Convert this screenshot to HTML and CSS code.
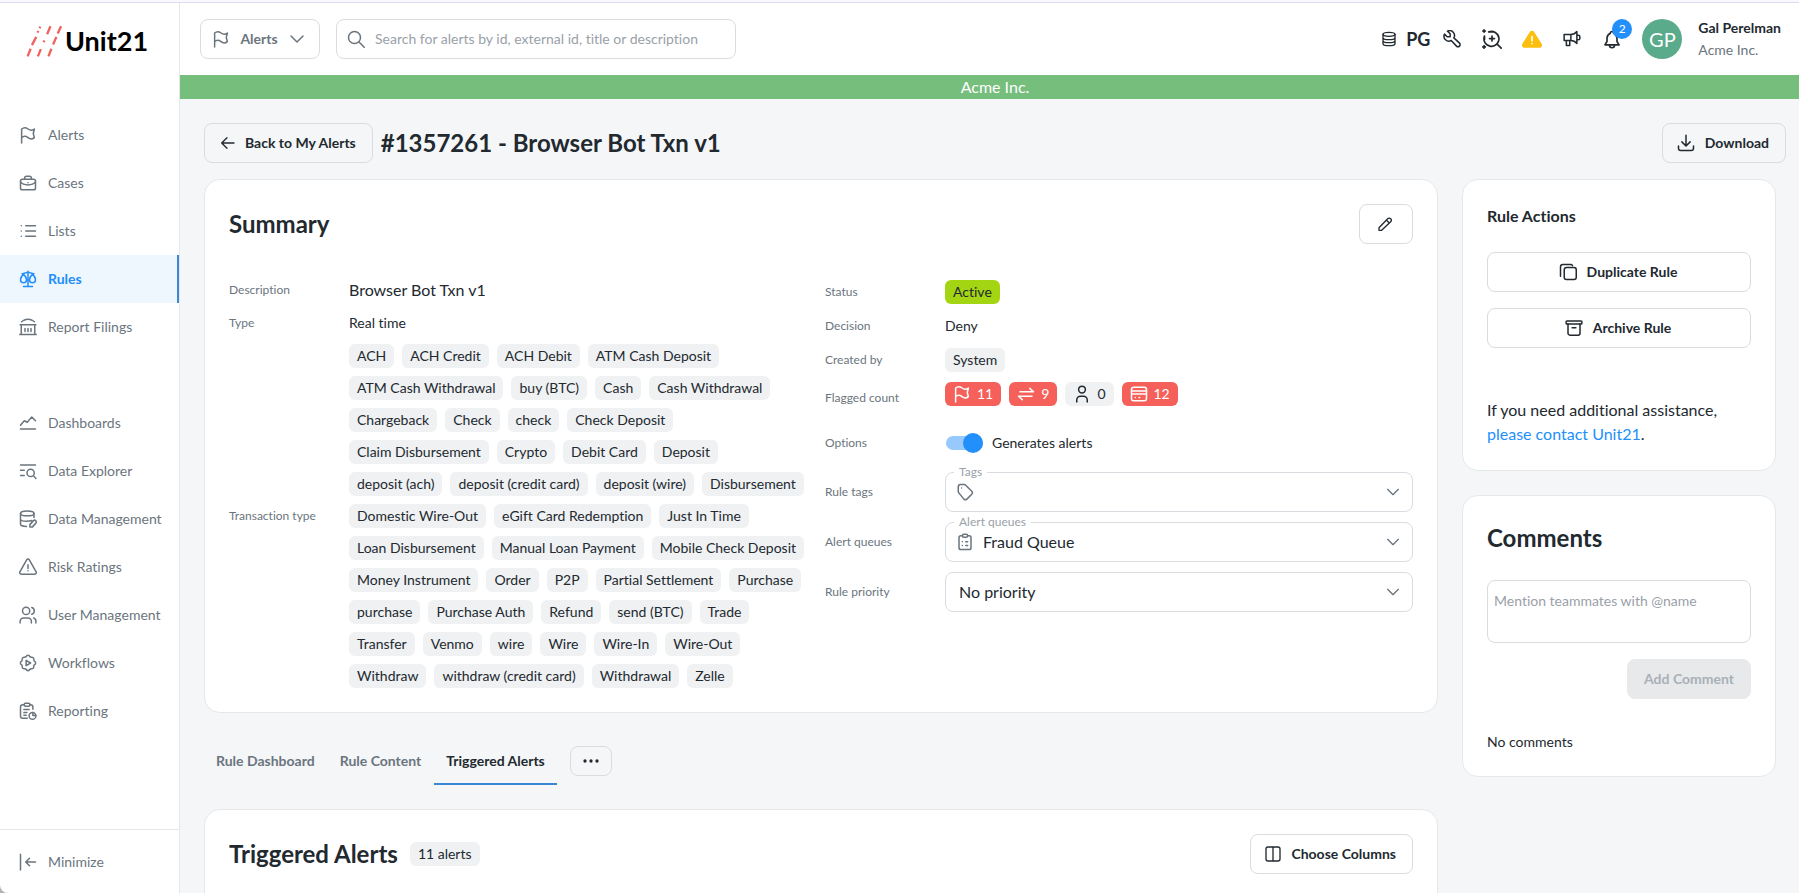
FILE: index.html
```html
<!DOCTYPE html>
<html lang="en">
<head>
  <meta charset="UTF-8" />
  <meta name="viewport" content="width=device-width, initial-scale=1.0" />
  <title>Unit21 - Browser Bot Txn v1</title>
  <link rel="stylesheet" href="styles.css">
</head>
<body>
  <!-- shared icons -->
  <svg class="sprite" aria-hidden="true">
    <symbol id="i-flag" viewBox="0 0 24 24"><path d="M3.500 4c3-2.500 6-2 8.500 0s5.500 2.500 8.500 0l-1.500 6l1.500 5.500c-3 2.500-6 2-8.500 0s-5.500-2.500-8.500 0zM3.500 22.500v-8" /></symbol>
    <symbol id="i-chevron" viewBox="0 0 24 24"><path d="M4 8l8 8l8-8" /></symbol>
    <symbol id="i-database" viewBox="0 0 24 24"><ellipse cx="12" cy="5" rx="9" ry="3" /><path d="M3 5v14c0 1.700 4 3 9 3s9-1.300 9-3v-14M3 10c0 1.700 4 3 9 3s9-1.300 9-3M3 14.500c0 1.700 4 3 9 3s9-1.300 9-3" /></symbol>
  </svg>

  <div class="app">
    <aside class="sidebar">
      <a class="logo" href="#">
        <svg class="logo-mark" viewBox="80 74 112 98">
          <path d="M85 168l9-23M98 134l13-25M115 96l2-5M121 83l2-5M116 168l9-22M133 125l3-5M144 101l10-24M148 168l9-23M162 132l10-23M176 99l10-22" />
        </svg>
        Unit21
      </a>
      <nav class="nav">
        <a href="#"><svg class="icon"><use href="#i-flag" /></svg>Alerts</a>
        <a href="#"><svg class="icon" viewBox="0 0 24 24"><rect x="2" y="7" width="20" height="14" rx="2.500" /><path d="M7.500 7v-1.500a2.500 2.500 0 0 1 2.500-2.500h4a2.500 2.500 0 0 1 2.500 2.500v1.500M2 10.500c2 2.500 6 4 10 4s8-1.500 10-4M12 11.500v.01" /></svg>Cases</a>
        <a href="#"><svg class="icon" viewBox="0 0 24 24"><path d="M9 5h13M9 12h13M9 19h13M3 5v.01M3 12v.01M3 19v.01" /></svg>Lists</a>
        <a class="active" href="#"><svg class="icon" viewBox="0 0 24 24"><path d="M6 22h12M12 1.500v20M4 5c4 0 5-2 8-2s4 2 8 2M6 5.500c-2 2-4 5-4 7.500c0 3 2 4 4 4s4-1 4-4c0-2.500-2-5.500-4-7.500zM18 5.500c-2 2-4 5-4 7.500c0 3 2 4 4 4s4-1 4-4c0-2.500-2-5.500-4-7.500z" /></svg>Rules</a>
        <a href="#"><svg class="icon" viewBox="0 0 24 24"><path d="M3.500 5l3-2a12 12 0 0 1 11 0l3 2M1.500 9h21M3 9v12M21 9v12M1 22h22M8 14v4M12 14v4M16 14v4" /></svg>Report Filings</a>
        <a class="group-start" href="#"><svg class="icon" viewBox="0 0 24 24"><path d="M2 20h20M2 15l5-6l4 2l6-7l5 5" /></svg>Dashboards</a>
        <a href="#"><svg class="icon" viewBox="0 0 24 24"><path d="M2 4h20M2 11h5M2 18h5M19.500 18.500l3 3.500" /><circle cx="15.500" cy="14.500" r="4.800" /></svg>Data Explorer</a>
        <a href="#"><svg class="icon" viewBox="0 0 24 24"><ellipse cx="11" cy="4.500" rx="9" ry="3.200" /><path d="M2 4.500v7.500c0 1.800 3.500 3 8 3c3 0 5-.3 7-1M20 4.500v5.500M2 12v7c0 1.500 3.500 3 8 3M14.500 22.500v-3l4.500-5a2.200 2.200 0 0 1 3.500 3l-4.500 5z" /></svg>Data Management</a>
        <a href="#"><svg class="icon" viewBox="0 0 24 24"><path d="M10.200 2.500l-9 16a2 2 0 0 0 1.800 3h18a2 2 0 0 0 1.800-3l-9-16a2.100 2.100 0 0 0-3.600 0zM12 9v5M12 17v.01" /></svg>Risk Ratings</a>
        <a href="#"><svg class="icon" viewBox="0 0 24 24"><circle cx="9.500" cy="6.500" r="4.800" /><path d="M1.500 22.500v-2a4.500 4.500 0 0 1 4.500-4.500h6a4.500 4.500 0 0 1 4.500 4.500v2M17 2a4.700 4.700 0 0 1 0 9M19.500 16a4.500 4.500 0 0 1 3 4.500v2" /></svg>User Management</a>
        <a href="#"><svg class="icon" viewBox="0 0 24 24"><path d="M9.500 3.500a2.700 2.700 0 0 1 5 0a2.700 2.700 0 0 0 2 .8a2.700 2.700 0 0 1 3.200 3.200a2.700 2.700 0 0 0 .8 2a2.700 2.700 0 0 1 0 5a2.700 2.700 0 0 0-.8 2a2.700 2.700 0 0 1-3.200 3.200a2.700 2.700 0 0 0-2 .8a2.700 2.700 0 0 1-5 0a2.700 2.700 0 0 0-2-.8a2.700 2.700 0 0 1-3.200-3.200a2.700 2.700 0 0 0-.8-2a2.700 2.700 0 0 1 0-5a2.700 2.700 0 0 0 .8-2a2.700 2.700 0 0 1 3.200-3.200a2.700 2.700 0 0 0 2-.8z" /><path d="M9.500 8.500v7l6-3.500z" /></svg>Workflows</a>
        <a href="#"><svg class="icon" viewBox="0 0 24 24"><path d="M7 3.500h-2a3 3 0 0 0-3 3v12a3 3 0 0 0 3 3h6M14.500 3.500h1a3 3 0 0 1 3 3v3M6.500 10h7M6.500 14h4M6.500 17.500h3M18.500 14v4h4" /><rect x="7" y="1.500" width="7.500" height="4" rx="1.500" /><circle cx="18" cy="18.500" r="4.500" /></svg>Reporting</a>
      </nav>
      <button class="minimize" type="button">
        <svg class="icon" viewBox="0 0 24 24"><path d="M2 1.500v21M22 12h-13M14 7l-5 5l5 5" /></svg>Minimize
      </button>
    </aside>

    <div class="main">
      <header class="topbar">
        <button class="btn scope" type="button">
          <svg class="icon"><use href="#i-flag" /></svg>Alerts<svg class="icon"><use href="#i-chevron" /></svg>
        </button>
        <label class="search">
          <svg class="icon" viewBox="0 0 24 24"><circle cx="10" cy="10" r="8" /><path d="M16 16l7 7" /></svg>
          <input type="search" aria-label="Search alerts" placeholder="Search for alerts by id, external id, title or description" />
        </label>
        <div class="tools">
          <button class="tool db" type="button"><svg class="icon small"><use href="#i-database" /></svg>PG</button>
          <button class="tool" type="button" aria-label="Tools"><svg class="icon" viewBox="0 0 24 24"><path d="M5.500 9h4v-4l-3.500-3.500a6.500 6.500 0 0 1 8.500 9l7.500 7a2.500 2.500 0 0 1-4 4l-7-7.500a6.500 6.500 0 0 1-9-8.500z" /></svg></button>
          <button class="tool" type="button" aria-label="Investigate"><svg class="icon large" viewBox="0 0 24 24"><path d="M8 3.500a9 9 0 1 1-5 5M8 3.500h5M3 8.500v4M18.500 18.500l4.500 4.500M12 8.500v6M9 11.500h6M2.500 1v3M1 2.500h3M2.500 20v3M1 21.500h3" /></svg></button>
          <button class="tool" type="button" aria-label="Warnings"><svg class="icon large warn" viewBox="0 0 24 24"><path d="M10.200 4l-9 14.500a2 2 0 0 0 1.800 3h18a2 2 0 0 0 1.800-3l-9-14.500a2.100 2.100 0 0 0-3.600 0z" /><path class="mark" d="M12 9v5M12 17.500v.01" /></svg></button>
          <button class="tool" type="button" aria-label="Announcements"><svg class="icon" viewBox="0 0 24 24"><path d="M1.500 6h9v8h-9zM10.500 6c4 0 6-1.500 8-4v16c-2-2.500-4-4-8-4M18.500 7h2a2 2 0 0 1 2 2v2a2 2 0 0 1-2 2h-2M4.500 14v6.500h4.500v-6.500" /></svg></button>
          <button class="tool bell" type="button" aria-label="2 notifications"><svg class="icon large" viewBox="0 0 24 24"><path d="M10 5a2 2 0 0 1 4 0a7 7 0 0 1 4 6v4l2.500 4h-17l2.500-4v-4a7 7 0 0 1 4-6M9 19v.500a3 3 0 0 0 6 0v-.500" /></svg><span class="badge">2</span></button>
        </div>
        <span class="avatar">GP</span>
        <div class="user">
          <strong>Gal Perelman</strong>
          <span>Acme Inc.</span>
        </div>
      </header>
      <div class="org-bar">Acme Inc.</div>

      <div class="page">
        <div class="page-head">
          <button class="btn" type="button"><svg class="icon small" viewBox="0 0 24 24"><path d="M22.500 12h-18M12 4l-8 8l8 8" /></svg>Back to My Alerts</button>
          <h1>#1357261 - Browser Bot Txn v1</h1>
          <button class="btn download" type="button"><svg class="icon" viewBox="0 0 24 24"><path d="M2 16v3a3 3 0 0 0 3 3h14a3 3 0 0 0 3-3v-3M12 1.500v14M6.500 10.500l5.500 5.500l5.500-5.500" /></svg>Download</button>
        </div>

        <div class="columns">
          <main>
            <section class="card">
              <div class="card-head">
                <h2>Summary</h2>
                <button class="btn edit" type="button" aria-label="Edit"><svg class="icon small" viewBox="0 0 24 24"><path d="M3 17.500l13-13.500a3 3 0 0 1 4.500 4.500l-13.500 13h-4zM14 6l4.500 4.500" /></svg></button>
              </div>
              <div class="summary">
                <dl class="fields left">
                  <div class="field"><dt>Description</dt><dd class="big">Browser Bot Txn v1</dd></div>
                  <div class="field"><dt>Type</dt><dd>Real time</dd></div>
                  <div class="field">
                    <dt>Transaction type</dt>
                    <dd class="chips">
                      <span class="chip">ACH</span><span class="chip">ACH Credit</span><span class="chip">ACH Debit</span><span class="chip">ATM Cash Deposit</span>
                      <span class="chip">ATM Cash Withdrawal</span><span class="chip">buy (BTC)</span><span class="chip">Cash</span><span class="chip">Cash Withdrawal</span>
                      <span class="chip">Chargeback</span><span class="chip">Check</span><span class="chip">check</span><span class="chip">Check Deposit</span>
                      <span class="chip">Claim Disbursement</span><span class="chip">Crypto</span><span class="chip">Debit Card</span><span class="chip">Deposit</span>
                      <span class="chip">deposit (ach)</span><span class="chip">deposit (credit card)</span><span class="chip">deposit (wire)</span><span class="chip">Disbursement</span>
                      <span class="chip">Domestic Wire-Out</span><span class="chip">eGift Card Redemption</span><span class="chip">Just In Time</span>
                      <span class="chip">Loan Disbursement</span><span class="chip">Manual Loan Payment</span><span class="chip">Mobile Check Deposit</span>
                      <span class="chip">Money Instrument</span><span class="chip">Order</span><span class="chip">P2P</span><span class="chip">Partial Settlement</span><span class="chip">Purchase</span>
                      <span class="chip">purchase</span><span class="chip">Purchase Auth</span><span class="chip">Refund</span><span class="chip">send (BTC)</span><span class="chip">Trade</span>
                      <span class="chip">Transfer</span><span class="chip">Venmo</span><span class="chip">wire</span><span class="chip">Wire</span><span class="chip">Wire-In</span><span class="chip">Wire-Out</span>
                      <span class="chip">Withdraw</span><span class="chip">withdraw (credit card)</span><span class="chip">Withdrawal</span><span class="chip">Zelle</span>
                    </dd>
                  </div>
                </dl>

                <dl class="fields right">
                  <div class="field"><dt>Status</dt><dd><span class="chip green">Active</span></dd></div>
                  <div class="field"><dt>Decision</dt><dd>Deny</dd></div>
                  <div class="field"><dt>Created by</dt><dd><span class="chip">System</span></dd></div>
                  <div class="field flagged">
                    <dt>Flagged count</dt>
                    <dd class="chips">
                      <span class="chip red"><svg class="icon"><use href="#i-flag" /></svg>11</span>
                      <span class="chip red"><svg class="icon" viewBox="0 0 24 24"><path d="M4 9h18l-5-4.500M20 15h-18l5 4.500" /></svg>9</span>
                      <span class="chip"><svg class="icon" viewBox="0 0 24 24"><circle cx="12" cy="6" r="4.500" /><path d="M5 22.500v-2.500a5 5 0 0 1 5-5h4a5 5 0 0 1 5 5v2.500" /></svg>0</span>
                      <span class="chip red"><svg class="icon" viewBox="0 0 24 24"><rect x="2" y="3" width="20" height="18" rx="3" /><path d="M2 8h20M2 12h20M7 16.500h.01M12 16.500h1" /></svg>12</span>
                    </dd>
                  </div>
                  <div class="field options">
                    <dt>Options</dt>
                    <dd><label class="switch"><input type="checkbox" checked />Generates alerts</label></dd>
                  </div>
                  <div class="field">
                    <dt><label for="ruleTags">Rule tags</label></dt>
                    <dd class="select has-icon">
                      <span class="float-label">Tags</span>
                      <svg class="icon lead" viewBox="0 0 24 24"><path d="M3 5a3 3 0 0 1 3-3h5a3 3 0 0 1 2 1l8 8a3 3 0 0 1 0 4l-6.500 6.500a3 3 0 0 1-4 0l-6.500-8a3 3 0 0 1-1-2zM7.500 6.500h.01" /></svg>
                      <select id="ruleTags"><option></option></select>
                      <svg class="icon small arrow"><use href="#i-chevron" /></svg>
                    </dd>
                  </div>
                  <div class="field">
                    <dt><label for="alertQueues">Alert queues</label></dt>
                    <dd class="select has-icon">
                      <span class="float-label">Alert queues</span>
                      <svg class="icon lead" viewBox="0 0 24 24"><path d="M8.500 3.500h-2a2.500 2.500 0 0 0-2.500 2.500v13.500a2.500 2.500 0 0 0 2.500 2.500h11a2.500 2.500 0 0 0 2.500-2.500v-13.500a2.500 2.500 0 0 0-2.500-2.500h-2M8.500 11.500h.01M8.500 16.500h.01M13 11.500h2.500M13 16.500h2.500" /><rect x="8.500" y="1.500" width="7" height="4" rx="2" /></svg>
                      <select id="alertQueues"><option>Fraud Queue</option></select>
                      <svg class="icon small arrow"><use href="#i-chevron" /></svg>
                    </dd>
                  </div>
                  <div class="field">
                    <dt><label for="rulePriority">Rule priority</label></dt>
                    <dd class="select">
                      <select id="rulePriority"><option>No priority</option></select>
                      <svg class="icon small arrow"><use href="#i-chevron" /></svg>
                    </dd>
                  </div>
                </dl>
              </div>
            </section>

            <div class="tabs">
              <a href="#">Rule Dashboard</a>
              <a href="#">Rule Content</a>
              <a class="active" href="#">Triggered Alerts</a>
              <button class="btn more" type="button" aria-label="More"><svg class="icon dots" viewBox="0 0 24 24"><circle cx="4" cy="12" r="2.200" /><circle cx="12" cy="12" r="2.200" /><circle cx="20" cy="12" r="2.200" /></svg></button>
            </div>

            <section class="card alerts">
              <div class="card-head">
                <h2>Triggered Alerts</h2>
                <span class="chip">11 alerts</span>
                <button class="btn choose" type="button"><svg class="icon small" viewBox="0 0 24 24"><rect x="1.500" y="1.500" width="21" height="21" rx="3" /><path d="M12 2v20" /></svg>Choose Columns</button>
              </div>
            </section>
          </main>

          <aside class="side">
            <section class="card">
              <h3>Rule Actions</h3>
              <div class="actions">
                <button class="btn" type="button"><svg class="icon" viewBox="0 0 24 24"><rect x="7" y="6" width="16" height="16" rx="3" /><path d="M2 17.500v-12.500a3 3 0 0 1 3-3h11a2 2 0 0 1 2 1.500" /></svg>Duplicate Rule</button>
                <button class="btn" type="button"><svg class="icon" viewBox="0 0 24 24"><rect x="1.500" y="2.500" width="21" height="4" rx="1" /><path d="M4 6.500v12.500a2.500 2.500 0 0 0 2.500 2.500h11a2.500 2.500 0 0 0 2.500-2.500v-12.500M9.500 11.500h5" /></svg>Archive Rule</button>
              </div>
              <p>If you need additional assistance,<br /><a href="#">please contact Unit21</a>.</p>
            </section>

            <section class="card comments">
              <h2>Comments</h2>
              <textarea aria-label="Comment" placeholder="Mention teammates with @name"></textarea>
              <button class="btn add" type="button" disabled>Add Comment</button>
              <div class="empty">No comments</div>
            </section>
          </aside>
        </div>
      </div>
    </div>
  </div>
</body>
</html>
```
FILE: styles.css
```css
:root {
  --text: #22292f;
  --muted: #6b757e;
  --placeholder: #9aa1a8;
  --line: #d9dce0;
  --card-line: #e5e8eb;
  --chip: #eff1f3;
  --page: #f4f6f8;
  --blue: #228ffa;
  --red: #f5605a;
}
* {
  box-sizing: border-box;
}
html {
  background: #b4b4b4;
}
body {
  margin: 0;
  font-family: Lato, sans-serif;
  font-size: 14px;
  font-variant-ligatures: no-common-ligatures;
  line-height: 20px;
  color: var(--text);
}
h1, h2, h3, p, dl, dd {
  margin: 0;
}
h1, h2 {
  font-size: 24px;
  line-height: 36px;
  font-weight: 700;
}
h3 {
  font-size: 16px;
  line-height: 24px;
  font-weight: 700;
}
a {
  color: var(--blue);
  text-decoration: none;
}
button, input, select, textarea {
  font: inherit;
  color: inherit;
}
button {
  cursor: pointer;
}
.sprite {
  display: none;
}
.icon {
  width: 18px;
  height: 18px;
  flex: none;
  fill: none;
  stroke: currentColor;
  stroke-width: 2;
  stroke-linecap: round;
  stroke-linejoin: round;
}
.icon.small {
  width: 16px;
  height: 16px;
}
.icon.large {
  width: 20px;
  height: 20px;
}

.app {
  display: flex;
  height: 100vh;
  overflow: hidden;
  padding-top: 3px;
  background: linear-gradient(#f9f9fd 2px, #dcdcf2 2px 3px, white 3px);
  border-bottom-left-radius: 8px;
}

/* Sidebar */
.sidebar {
  display: flex;
  flex-direction: column;
  flex: none;
  width: 180px;
  border-right: 1px solid var(--card-line);
}
.logo {
  display: flex;
  align-items: center;
  gap: 2px;
  height: 76px;
  padding-left: 26px;
  margin-bottom: 32px;
  font-size: 27px;
  font-weight: 700;
  color: black;
}
.logo-mark {
  width: 37px;
  height: 33px;
  fill: none;
  stroke: #f0625d;
  stroke-width: 7;
}
.nav a, .minimize {
  display: flex;
  align-items: center;
  gap: 11px;
  height: 48px;
  padding-left: 19px;
  color: var(--muted);
}
.nav .active {
  color: var(--blue);
  font-weight: 700;
  background: #eef6fe;
  border-right: 2px solid #3a87d4;
}
.nav .group-start {
  margin-top: 48px;
}
.minimize {
  height: 64px;
  margin-top: auto;
  background: none;
  border: none;
  border-top: 1px solid var(--card-line);
}

/* Buttons */
.btn {
  display: flex;
  align-items: center;
  justify-content: center;
  gap: 10px;
  height: 40px;
  padding: 0 16px 0 14px;
  font-weight: 700;
  background: none;
  border: 1px solid var(--line);
  border-radius: 8px;
  white-space: nowrap;
}

/* Top bar */
.main {
  display: flex;
  flex-direction: column;
  flex: 1;
  min-width: 0;
}
.topbar {
  display: flex;
  align-items: center;
  flex: none;
  height: 72px;
  padding: 0 18px 0 20px;
}
.scope {
  width: 120px;
  margin-right: 16px;
  color: var(--muted);
}
.search {
  display: flex;
  align-items: center;
  gap: 10px;
  width: 400px;
  height: 40px;
  padding: 0 10px;
  border: 1px solid var(--line);
  border-radius: 8px;
  color: var(--muted);
}
.search input {
  flex: 1;
  min-width: 0;
  padding: 0;
  border: none;
  outline: none;
  background: none;
}
::placeholder {
  color: var(--placeholder);
  opacity: 1;
}
.tools {
  display: flex;
  margin-left: auto;
}
.tool {
  display: flex;
  align-items: center;
  justify-content: center;
  width: 40px;
  height: 40px;
  padding: 0;
  background: none;
  border: none;
}
.tool.db {
  width: auto;
  gap: 9px;
  margin-right: 2px;
  font-size: 18px;
  font-weight: 700;
}
.warn {
  fill: #fdbf0f;
  stroke: #fdbf0f;
}
.warn .mark {
  stroke: white;
}
.bell {
  position: relative;
}
.badge {
  position: absolute;
  top: 0;
  right: 0;
  width: 20px;
  height: 20px;
  border-radius: 50%;
  background: var(--blue);
  color: white;
  font-size: 12px;
}
.avatar {
  width: 40px;
  height: 40px;
  margin: 0 16px 0 10px;
  border-radius: 50%;
  background: #5aab8b;
  color: white;
  font-size: 20px;
  line-height: 40px;
  text-align: center;
}
.user {
  display: flex;
  flex-direction: column;
  gap: 2px;
}
.user span {
  color: var(--muted);
}
.org-bar {
  flex: none;
  padding-left: 11px;
  background: #75be7c;
  color: white;
  font-size: 16px;
  line-height: 24px;
  text-align: center;
}

/* Page */
.page {
  flex: 1;
  overflow-y: auto;
  scrollbar-width: none;
  background: var(--page);
}
.page-head {
  display: flex;
  align-items: center;
  gap: 8px;
  padding: 24px 13px 16px 24px;
}
.download {
  margin-left: auto;
}
.columns {
  display: grid;
  grid-template-columns: minmax(0, 1fr) 314px;
  gap: 24px;
  padding: 0 23px 24px 24px;
}
.card {
  padding: 24px;
  background: white;
  border: 1px solid var(--card-line);
  border-radius: 16px;
}
.card.alerts {
  padding-bottom: 64px;
}
.card-head {
  display: flex;
  align-items: center;
  gap: 12px;
}
.edit, .choose {
  margin-left: auto;
}
.edit {
  width: 54px;
}

/* Summary */
.summary {
  display: grid;
  grid-template-columns: 1fr 1fr;
  gap: 8px;
  margin-top: 34px;
}
.fields {
  display: flex;
  flex-direction: column;
  gap: 10px;
}
.fields.left {
  gap: 11px;
}
.fields.right {
  padding-top: 2px;
}
.field {
  display: flex;
  align-items: center;
}
.right .field {
  min-height: 24px;
}
.field dt {
  flex: none;
  width: 120px;
  font-size: 12px;
  color: var(--muted);
}
.field dd {
  flex: 1;
}
.field .big {
  font-size: 16px;
  line-height: 24px;
}
.chips {
  display: flex;
  flex-wrap: wrap;
  gap: 8px;
}
.chip {
  display: inline-flex;
  align-items: center;
  gap: 6px;
  height: 24px;
  padding: 0 8px;
  border-radius: 6px;
  background: var(--chip);
  vertical-align: top;
}
.chip.green {
  background: #a3d512;
}
.chip.red {
  background: var(--red);
  color: white;
}
.right .flagged {
  min-height: 32px;
}
.flagged dd {
  align-self: flex-start;
}
.right .options {
  min-height: 38px;
}
.switch {
  display: flex;
  align-items: center;
  gap: 9px;
}
.switch input {
  appearance: none;
  display: flex;
  align-items: center;
  justify-content: flex-end;
  width: 37px;
  height: 14px;
  margin: 0 0 0 1px;
  border-radius: 7px;
  background: #97c9fd;
}
.switch input::after {
  content: "";
  width: 20px;
  height: 20px;
  flex: none;
  border-radius: 50%;
  background: var(--blue);
}
.switch input:not(:checked) {
  justify-content: flex-start;
}
.select {
  position: relative;
}
.select select {
  display: block;
  appearance: none;
  width: 100%;
  height: 40px;
  padding: 0 40px 0 13px;
  border: 1px solid var(--line);
  border-radius: 8px;
  background: white;
  font-size: 16px;
}
.select.has-icon select {
  padding-left: 37px;
}
.select .lead {
  position: absolute;
  top: 11px;
  left: 11px;
  color: var(--muted);
  pointer-events: none;
}
.select .arrow {
  position: absolute;
  top: 12px;
  right: 12px;
  color: var(--muted);
  pointer-events: none;
}
.float-label {
  position: absolute;
  top: -8px;
  left: 9px;
  padding: 0 5px;
  background: white;
  color: var(--placeholder);
  font-size: 12px;
  line-height: 16px;
}

/* Tabs */
.tabs {
  display: flex;
  align-items: center;
  gap: 1px;
  margin: 24px 0;
}
.tabs a {
  height: 48px;
  padding: 0 12px;
  color: var(--muted);
  font-weight: 700;
  line-height: 48px;
}
.tabs .active {
  color: var(--text);
  box-shadow: inset 0 -2px #3a87d4;
}
.more {
  width: 42px;
  height: 30px;
  margin-left: 12px;
  padding: 0;
}
.dots {
  fill: currentColor;
  stroke: none;
}

/* Right column */
.side {
  display: flex;
  flex-direction: column;
  align-self: start;
  gap: 24px;
}
.actions {
  display: flex;
  flex-direction: column;
  gap: 16px;
  margin: 24px 0 50px;
}
.side p {
  font-size: 16px;
  line-height: 24px;
}
.comments {
  display: flex;
  flex-direction: column;
}
.comments textarea {
  height: 63px;
  margin: 24px 0 16px;
  padding: 10px 6px;
  border: 1px solid var(--line);
  border-radius: 8px;
  resize: none;
}
.add {
  align-self: flex-end;
  padding: 0 16px;
  border-color: #e7e9eb;
  background: #e7e9eb;
  color: #a9b0b8;
}
.empty {
  margin-top: 33px;
}
```
